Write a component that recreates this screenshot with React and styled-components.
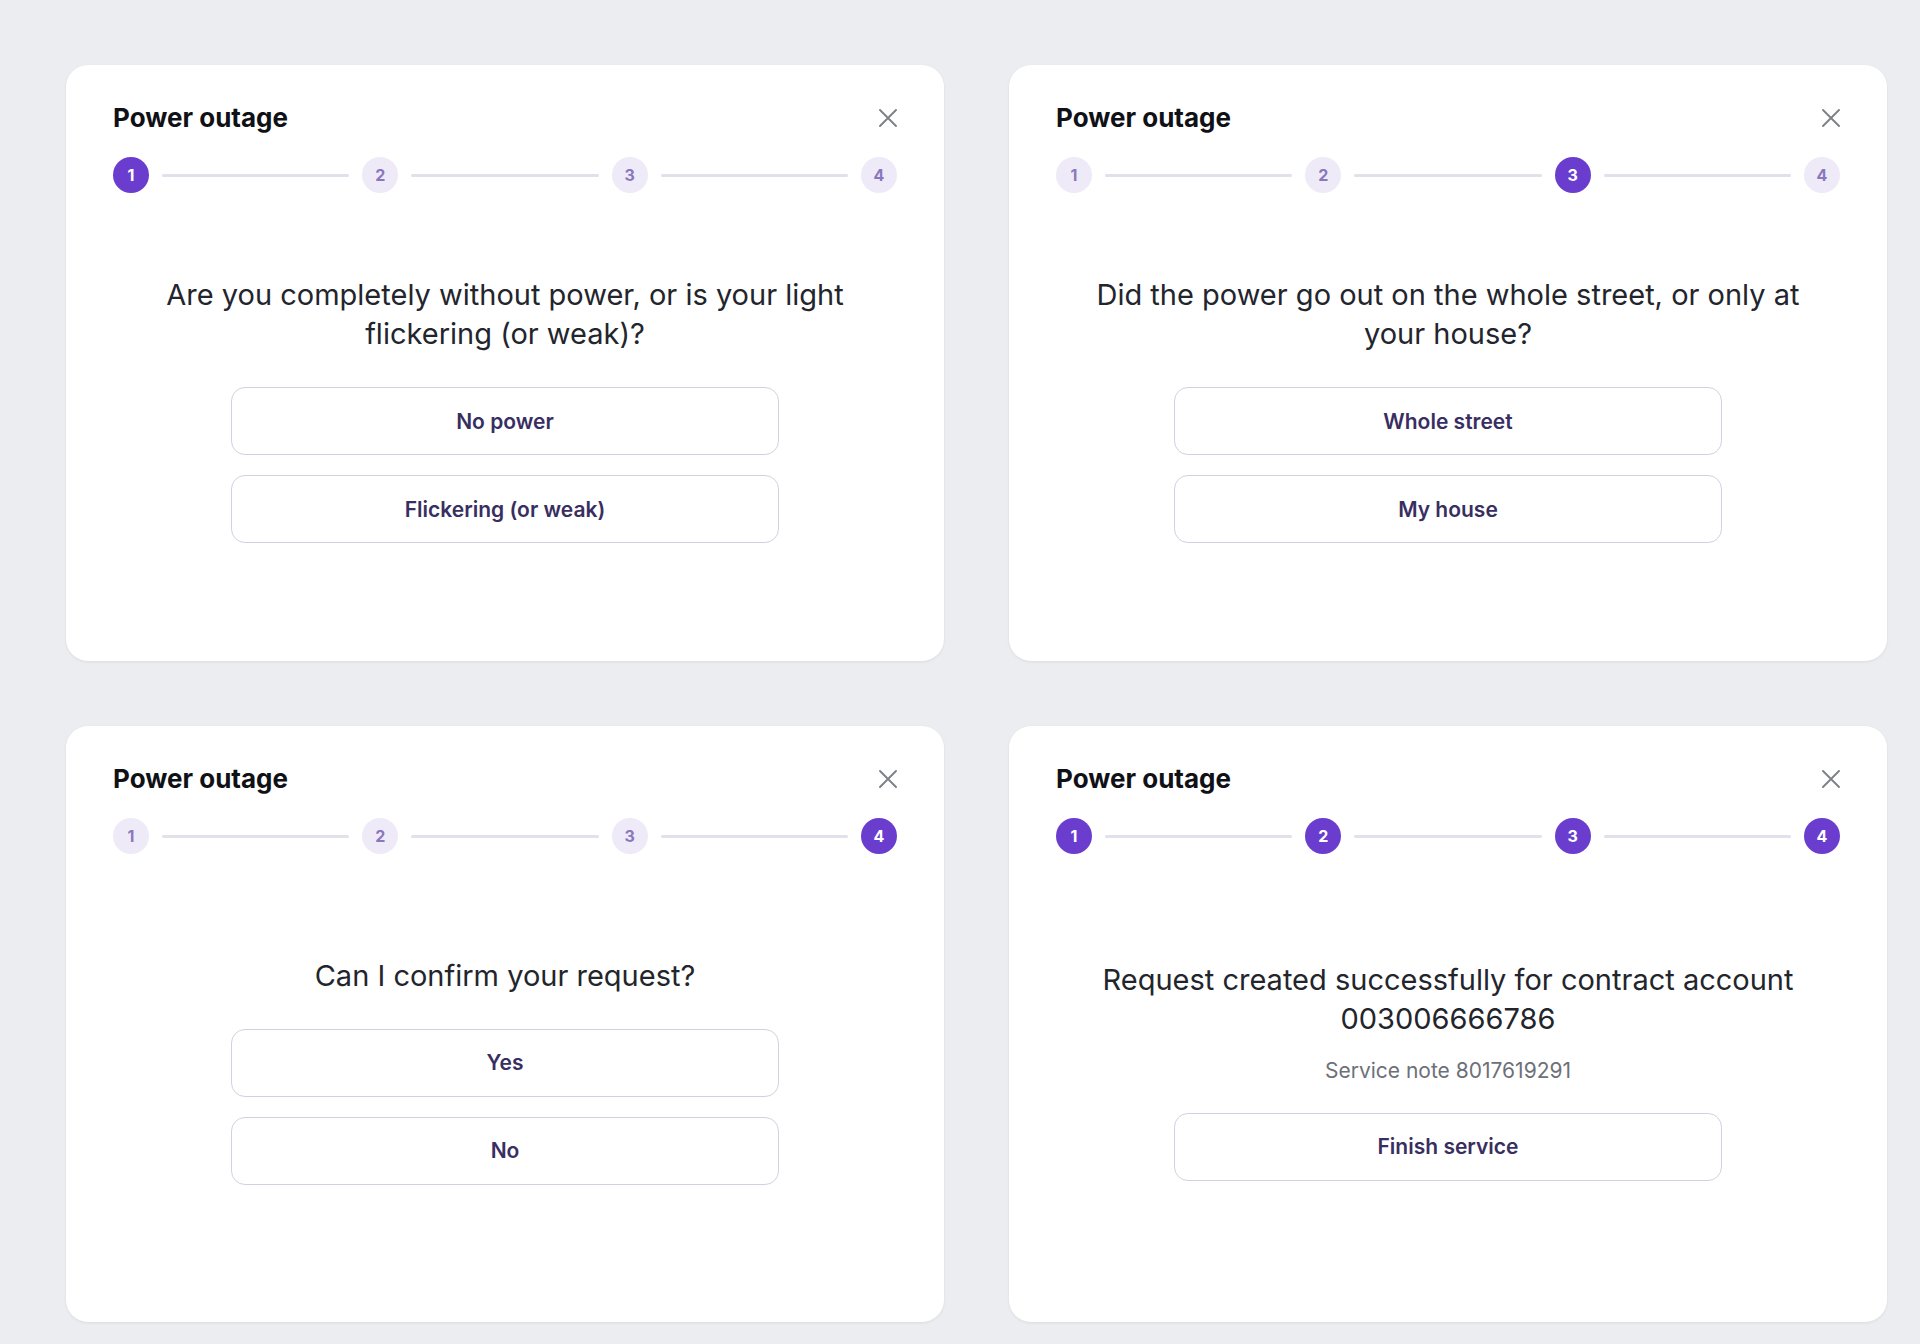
import React from "react";
import styled, { createGlobalStyle } from "styled-components";

const GlobalStyle = createGlobalStyle`
  *, *::before, *::after { box-sizing: border-box; }
  body {
    margin: 0;
    background: #ecedf1;
    font-family: Inter, "Liberation Sans", sans-serif;
  }
`;

const Board = styled.main`
  display: grid;
  grid-template-columns: repeat(2, minmax(0, 1fr));
  gap: 65px;
  padding: 65px 33px 22px 66px;
`;

const Card = styled.section`
  display: flex;
  flex-direction: column;
  padding: 36px 47px;
  border-radius: 22px;
  background: #fff;
  box-shadow: 0 1px 3px rgba(20, 20, 30, 0.08);
`;

const CardHeader = styled.header`
  display: flex;
  align-items: center;
  justify-content: space-between;
  margin-bottom: 23px;
`;

const Title = styled.h2`
  margin: 0;
  color: #101116;
  font-size: 26px;
  font-weight: 700;
  line-height: 33px;
`;

const CloseButton = styled.button`
  display: flex;
  padding: 0;
  border: 0;
  background: none;
  color: #7e8087;
  cursor: pointer;
`;

const Stepper = styled.ol`
  display: flex;
  align-items: center;
  gap: 13px;
  margin: 0;
  padding: 0;
  list-style: none;
`;

const Step = styled.li`
  display: flex;
  align-items: center;
  gap: 13px;
  flex: 1;

  &:last-child { flex: none; }

  &:not(:last-child)::after {
    content: "";
    flex: 1;
    height: 3px;
    border-radius: 2px;
    background: #e2e0ea;
  }
`;

const StepDot = styled.span`
  display: flex;
  align-items: center;
  justify-content: center;
  width: 36px;
  height: 36px;
  border-radius: 50%;
  background: ${(p) => (p.$active ? "#6b3dcf" : "#eeeaf8")};
  color: ${(p) => (p.$active ? "#fff" : "#8a78bd")};
  font-size: 16px;
  font-weight: 700;
`;

const Body = styled.div`
  display: flex;
  flex-direction: column;
  align-items: center;
  justify-content: center;
  min-height: 432px;
  padding: 0 24px;
  text-align: center;
`;

const Question = styled.p`
  margin: 0;
  color: #23252d;
  font-size: 29px;
  font-weight: 400;
  line-height: 39px;
`;

const Note = styled.p`
  margin: 19px 0 0;
  color: #6d7078;
  font-size: 21px;
  line-height: 27px;
`;

const Actions = styled.div`
  display: flex;
  flex-direction: column;
  gap: 20px;
  width: 100%;
  max-width: 548px;
  margin-top: ${(p) => (p.$afterNote ? "29px" : "34px")};
`;

const ActionButton = styled.button`
  height: 68px;
  border: 1px solid #d3d1dd;
  border-radius: 14px;
  background: #fff;
  color: #382e61;
  font-family: inherit;
  font-size: 21px;
  font-weight: 600;
  cursor: pointer;
`;

const steps = [1, 2, 3, 4];

const cards = [
  {
    active: [1],
    question: "Are you completely without power, or is your light flickering (or weak)?",
    actions: ["No power", "Flickering (or weak)"],
  },
  {
    active: [3],
    question: "Did the power go out on the whole street, or only at your house?",
    actions: ["Whole street", "My house"],
  },
  {
    active: [4],
    question: "Can I confirm your request?",
    actions: ["Yes", "No"],
  },
  {
    active: [1, 2, 3, 4],
    question: "Request created successfully for contract account 003006666786",
    note: "Service note 8017619291",
    actions: ["Finish service"],
  },
];

function CloseIcon() {
  return (
    <svg width="18" height="18" viewBox="0 0 18 18" fill="none" aria-hidden="true">
      <path
        d="M1 1L17 17M17 1L1 17"
        stroke="currentColor"
        strokeWidth="1.9"
        strokeLinecap="round"
      />
    </svg>
  );
}

function OutageCard({ active, question, note, actions }) {
  return (
    <Card>
      <CardHeader>
        <Title>Power outage</Title>
        <CloseButton type="button" aria-label="Close">
          <CloseIcon />
        </CloseButton>
      </CardHeader>
      <Stepper>
        {steps.map((n) => (
          <Step key={n}>
            <StepDot $active={active.includes(n)}>{n}</StepDot>
          </Step>
        ))}
      </Stepper>
      <Body>
        <Question>{question}</Question>
        {note && <Note>{note}</Note>}
        <Actions $afterNote={Boolean(note)}>
          {actions.map((label) => (
            <ActionButton key={label} type="button">
              {label}
            </ActionButton>
          ))}
        </Actions>
      </Body>
    </Card>
  );
}

export default function App() {
  return (
    <>
      <GlobalStyle />
      <Board>
        {cards.map((card) => (
          <OutageCard key={card.question} {...card} />
        ))}
      </Board>
    </>
  );
}
